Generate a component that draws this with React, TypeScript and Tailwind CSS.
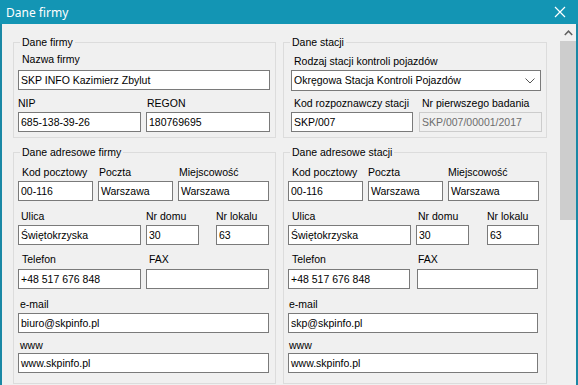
import React from "react";

function Label({ children, cls = "" }: { children: React.ReactNode; cls?: string }) {
  return <div className={"h-[13px] leading-[13px] text-[10.5px] whitespace-nowrap text-black " + cls}>{children}</div>;
}

function Input({ value = "", cls = "", disabled = false }: { value?: string; cls?: string; disabled?: boolean }) {
  return (
    <div
      className={
        "h-[20px] leading-[18px] text-[10.5px] pl-[2px] whitespace-nowrap overflow-hidden border " +
        (disabled ? "bg-[#f0f0f0] border-[#cccccc] text-[#6d6d6d] " : "bg-white border-[#7a7a7a] text-black ") +
        cls
      }
    >
      {value}
    </div>
  );
}

function Group({ title, cls = "", children }: { title: string; cls?: string; children: React.ReactNode }) {
  return (
    <div className={"relative border border-[#dcdcdc] " + cls}>
      <span className="absolute left-[6px] top-[-7px] px-[2px] bg-[#f0f0f0] h-[13px] leading-[13px] text-[10.5px] text-black whitespace-nowrap">
        {title}
      </span>
      {children}
    </div>
  );
}

function Col({ label, value, w, lcls = "", disabled = false }: { label: string; value?: string; w: string; lcls?: string; disabled?: boolean }) {
  return (
    <div className={"flex flex-col " + w}>
      <Label cls={lcls}>{label}</Label>
      <Input value={value} disabled={disabled} cls="mt-[2px] w-full" />
    </div>
  );
}

export default function App() {
  return (
    <div className="w-[578px] h-[385px] overflow-hidden bg-[#f0f0f0] flex flex-col font-['Liberation_Sans',Arial,sans-serif]">
      {/* Title bar */}
      <div className="h-[24px] bg-[#1395b4] flex items-center justify-between shrink-0">
        <span className="pl-[6px] text-white text-[12px] font-['Noto_Sans','Open_Sans',sans-serif] leading-[16px] pt-[1px]">
          Dane firmy
        </span>
        <svg width="12" height="12" viewBox="0 0 12 12" className="mr-[12px]">
          <path d="M1 1 L11 11 M11 1 L1 11" stroke="white" strokeWidth="1.2" />
        </svg>
      </div>

      {/* Body */}
      <div className="flex flex-row flex-1 border-l-2 border-r-2 border-[#1a88a5]">
        {/* Left column */}
        <div className="ml-[11px] w-[263px] flex flex-col shrink-0">
          <Group title="Dane firmy" cls="mt-[18px] h-[96px] pl-[4px]">
            <Label cls="mt-[10px] ml-[4px]">Nazwa firmy</Label>
            <Input value="SKP INFO Kazimierz Zbylut" cls="mt-[4px] w-[252px]" />
            <div className="flex flex-row mt-[7px] gap-[5px]">
              <Col label="NIP" value="685-138-39-26" w="w-[123px]" />
              <Col label="REGON" value="180769695" w="w-[124px]" lcls="ml-[1px]" />
            </div>
          </Group>

          <Group title="Dane adresowe firmy" cls="mt-[14px] h-[232px] pl-[4px]">
            <div className="flex flex-row mt-[13px] gap-[5px]">
              <Col label="Kod pocztowy" value="00-116" w="w-[75px]" lcls="ml-[4px]" />
              <Col label="Poczta" value="Warszawa" w="w-[75px]" lcls="ml-[1px]" />
              <Col label="Miejscowość" value="Warszawa" w="w-[91px]" lcls="ml-[1px]" />
            </div>
            <div className="flex flex-row mt-[9px]">
              <Col label="Ulica" value="Świętokrzyska" w="w-[123px]" lcls="ml-[3px]" />
              <Col label="Nr domu" value="30" w="w-[53px] ml-[5px]" />
              <Col label="Nr lokalu" value="63" w="w-[53px] ml-[17px]" />
            </div>
            <div className="flex flex-row mt-[8px] gap-[5px]">
              <div className="flex flex-col w-[123px]">
                <Label cls="ml-[4px]">Telefon</Label>
                <Input value="+48 517 676 848" cls="mt-[3px] w-full" />
              </div>
              <div className="flex flex-col w-[123px]">
                <Label cls="ml-[3px]">FAX</Label>
                <Input value="" cls="mt-[3px] w-full" />
              </div>
            </div>
            <Label cls="mt-[9px] ml-[2px]">e-mail</Label>
            <Input value="biuro@skpinfo.pl" cls="mt-[2px] w-[251px]" />
            <Label cls="mt-[6px] ml-[2px]">www</Label>
            <Input value="www.skpinfo.pl" cls="mt-[1px] w-[251px]" />
          </Group>
        </div>

        {/* Right column */}
        <div className="ml-[7px] w-[264px] flex flex-col shrink-0">
          <Group title="Dane stacji" cls="mt-[18px] h-[96px] pl-[7px]">
            <Label cls="mt-[12px] ml-[3px]">Rodzaj stacji kontroli pojazdów</Label>
            <div className="mt-[2px] w-[250px] h-[21px] bg-white border border-[#7a7a7a] flex items-center justify-between pl-[2px] pr-[5px]">
              <span className="text-[10.5px] leading-[19px] text-black whitespace-nowrap">Okręgowa Stacja Kontroli Pojazdów</span>
              <svg width="10" height="6" viewBox="0 0 10 6">
                <path d="M0.5 0.5 L5 5 L9.5 0.5" fill="none" stroke="#555555" strokeWidth="1" />
              </svg>
            </div>
            <div className="flex flex-row mt-[6px] gap-[6px]">
              <Col label="Kod rozpoznawczy stacji" value="SKP/007" w="w-[122px]" lcls="ml-[3px]" />
              <Col label="Nr pierwszego badania" value="SKP/007/00001/2017" w="w-[123px]" lcls="ml-[3px]" disabled />
            </div>
          </Group>

          <Group title="Dane adresowe stacji" cls="mt-[14px] h-[232px] pl-[4px]">
            <div className="flex flex-row mt-[13px] gap-[5px]">
              <Col label="Kod pocztowy" value="00-116" w="w-[75px]" lcls="ml-[4px]" />
              <Col label="Poczta" value="Warszawa" w="w-[75px]" />
              <Col label="Miejscowość" value="Warszawa" w="w-[91px]" />
            </div>
            <div className="flex flex-row mt-[9px]">
              <Col label="Ulica" value="Świętokrzyska" w="w-[123px]" lcls="ml-[4px]" />
              <Col label="Nr domu" value="30" w="w-[53px] ml-[5px]" lcls="ml-[2px]" />
              <Col label="Nr lokalu" value="63" w="w-[52px] ml-[18px]" />
            </div>
            <div className="flex flex-row mt-[8px] gap-[7px]">
              <div className="flex flex-col w-[122px]">
                <Label cls="ml-[4px]">Telefon</Label>
                <Input value="+48 517 676 848" cls="mt-[3px] w-full" />
              </div>
              <div className="flex flex-col w-[121px]">
                <Label cls="ml-[1px]">FAX</Label>
                <Input value="" cls="mt-[3px] w-full" />
              </div>
            </div>
            <Label cls="mt-[9px] ml-[1px]">e-mail</Label>
            <Input value="skp@skpinfo.pl" cls="mt-[2px] w-[250px]" />
            <Label cls="mt-[6px] ml-[1px]">www</Label>
            <Input value="www.skpinfo.pl" cls="mt-[1px] w-[250px]" />
          </Group>
        </div>

        {/* Scrollbar */}
        <div className="ml-[13px] w-[16px] flex flex-col shrink-0 bg-[#f0f0f0]">
          <div className="h-[17px] flex items-center justify-center">
            <svg width="9" height="6" viewBox="0 0 9 6">
              <path d="M0.8 5 L4.5 1.2 L8.2 5" fill="none" stroke="#606060" strokeWidth="1.5" />
            </svg>
          </div>
          <div className="h-[179px] bg-[#cdcdcd]" />
        </div>
      </div>
    </div>
  );
}
